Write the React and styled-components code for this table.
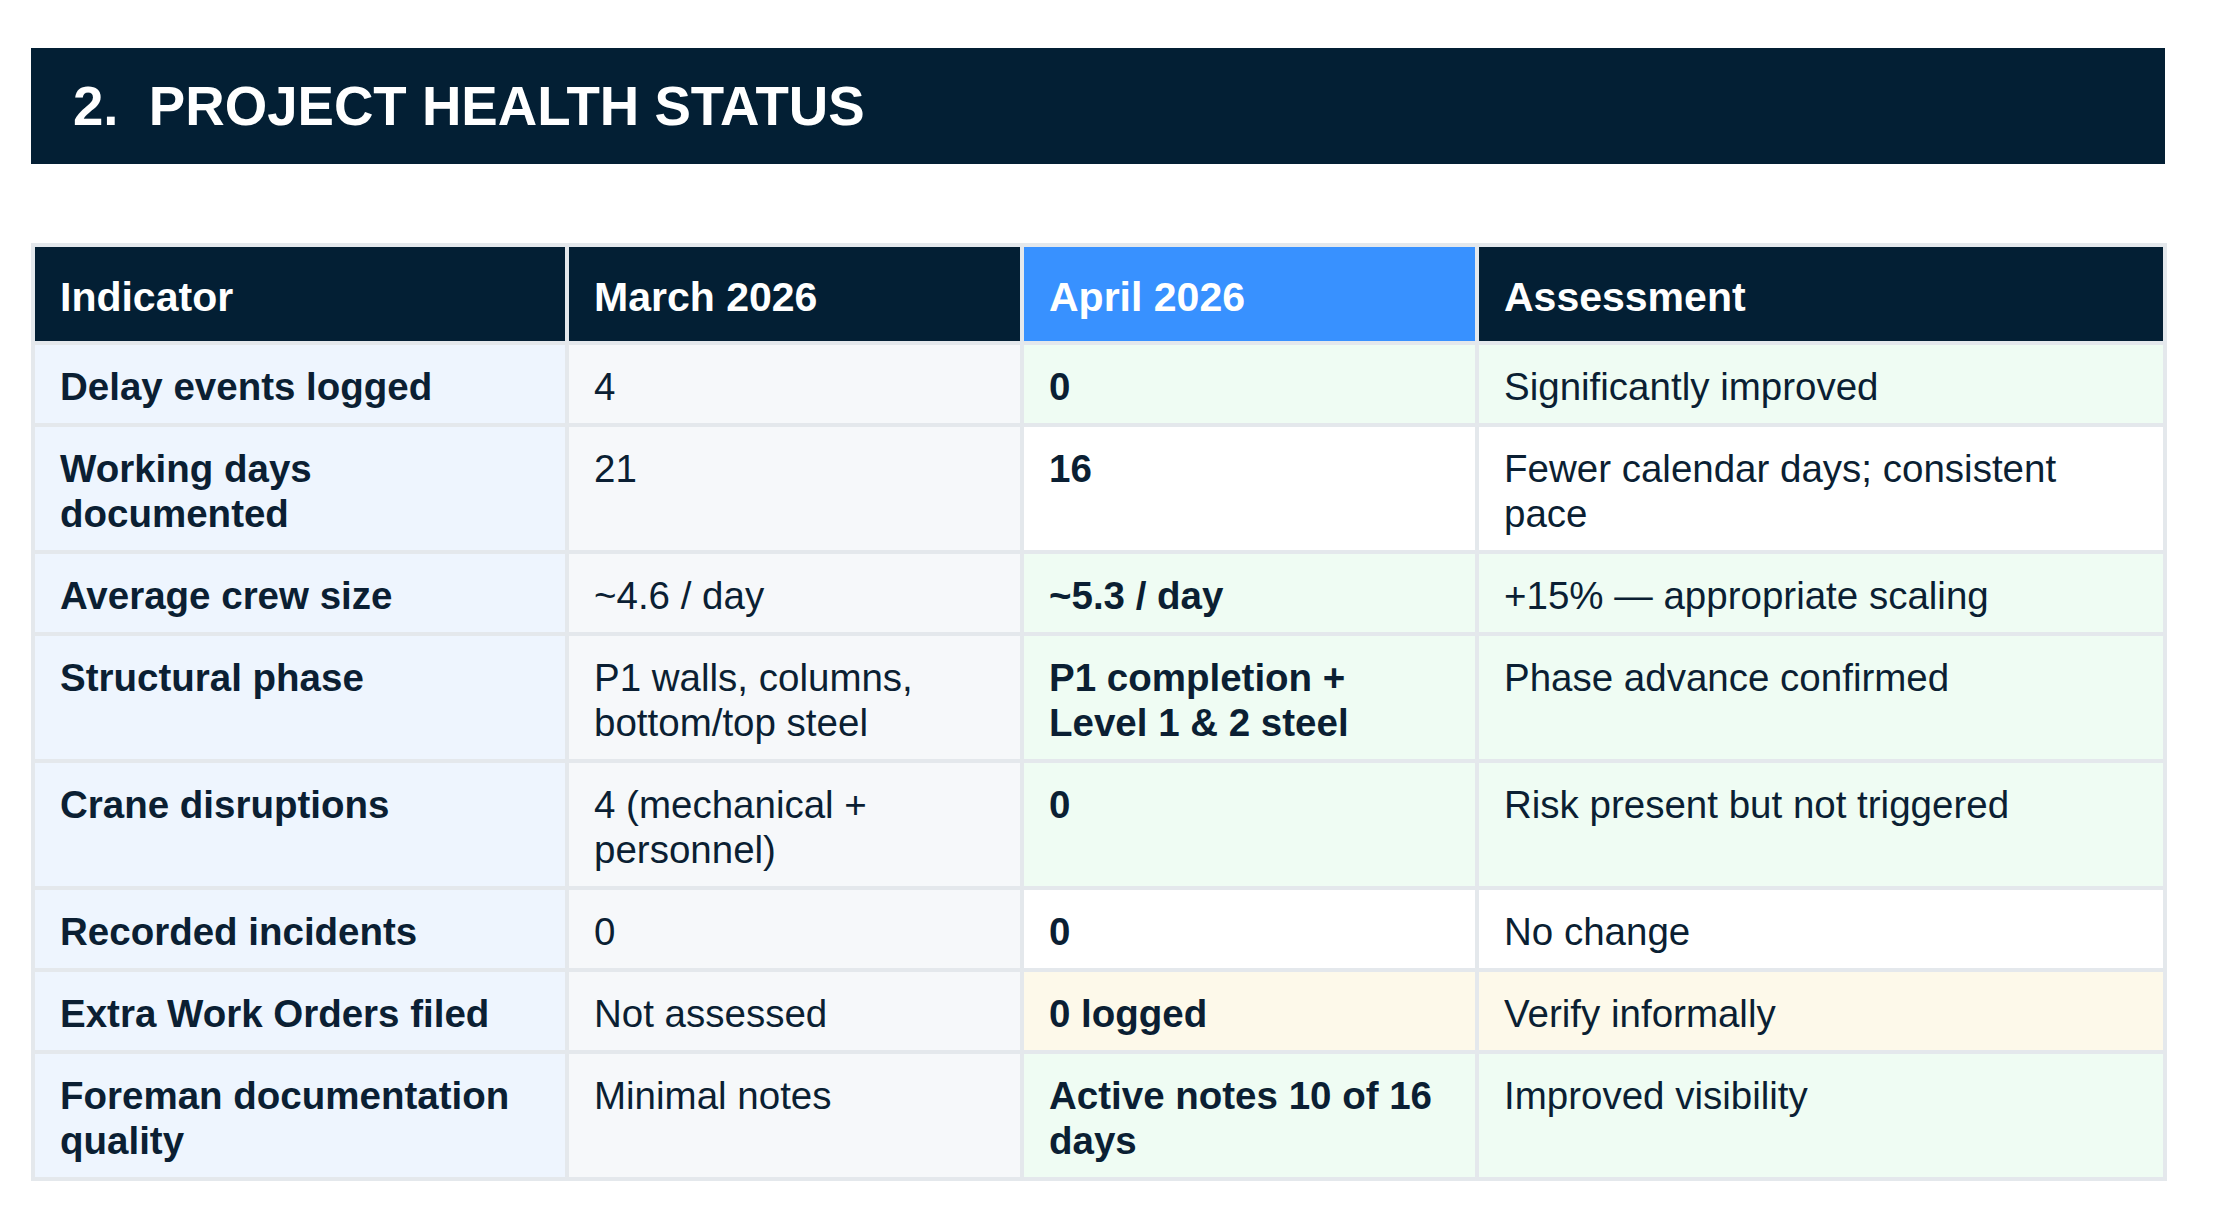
import React from "react";
import styled, { createGlobalStyle } from "styled-components";

const Global = createGlobalStyle`
  html, body { margin: 0; padding: 0; background: #ffffff; }
  body { font-family: "Liberation Sans", Arial, Helvetica, sans-serif; color: #0b1f33; }
`;

const Page = styled.div`
  padding: 48px 55px 30px 31px;
  width: 2134px;
`;

const SectionBar = styled.div`
  height: 116px;
  background: #031f34;
  display: flex;
  align-items: center;
  padding-left: 42px;
  box-sizing: border-box;
`;

const SectionTitle = styled.h2`
  margin: 0;
  font-size: 54.6px;
  font-weight: 700;
  color: #ffffff;
  white-space: pre;
  letter-spacing: 0;
`;

const Table = styled.table`
  margin-top: 79px;
  width: 2132px;
  table-layout: fixed;
  border-collapse: collapse;
  border: 4px solid #e4e8ec;
`;

const HeadCell = styled.th`
  text-align: left;
  vertical-align: top;
  font-size: 41px;
  line-height: 48px;
  font-weight: 700;
  color: #ffffff;
  background: ${(p) => (p.$accent ? "#3891ff" : "#031f34")};
  padding: 26px 25px 20px 25px;
  border: 4px solid #e4e8ec;
`;

const tones = {
  label: "#eef5fe",
  prev: "#f6f8fa",
  green: "#effcf3",
  white: "#ffffff",
  yellow: "#fdf9ea",
};

const Cell = styled.td`
  text-align: left;
  vertical-align: top;
  font-size: 38.5px;
  line-height: 45px;
  font-weight: ${(p) => (p.$bold ? 700 : 400)};
  color: #0b1f33;
  background: ${(p) => tones[p.$tone]};
  padding: 19px 30px 14px 25px;
  border: 4px solid #e4e8ec;
`;

const rows = [
  ["Delay events logged", "4", "0", "Significantly improved", "green"],
  ["Working days documented", "21", "16", "Fewer calendar days; consistent pace", "white"],
  ["Average crew size", "~4.6 / day", "~5.3 / day", "+15% \u2014 appropriate scaling", "green"],
  ["Structural phase", "P1 walls, columns, bottom/top steel", "P1 completion + Level 1 & 2 steel", "Phase advance confirmed", "green"],
  ["Crane disruptions", "4 (mechanical + personnel)", "0", "Risk present but not triggered", "green"],
  ["Recorded incidents", "0", "0", "No change", "white"],
  ["Extra Work Orders filed", "Not assessed", "0 logged", "Verify informally", "yellow"],
  ["Foreman documentation quality", "Minimal notes", "Active notes 10 of 16 days", "Improved visibility", "green"],
];

export default function App() {
  return (
    <Page>
      <Global />
      <SectionBar>
        <SectionTitle>{"2.  PROJECT HEALTH STATUS"}</SectionTitle>
      </SectionBar>
      <Table>
        <colgroup>
          <col style={{ width: 534 }} />
          <col style={{ width: 455 }} />
          <col style={{ width: 455 }} />
          <col style={{ width: 688 }} />
        </colgroup>
        <thead>
          <tr>
            <HeadCell>Indicator</HeadCell>
            <HeadCell>March 2026</HeadCell>
            <HeadCell $accent>April 2026</HeadCell>
            <HeadCell>Assessment</HeadCell>
          </tr>
        </thead>
        <tbody>
          {rows.map(([label, prev, cur, note, tone]) => (
            <tr key={label}>
              <Cell $tone="label" $bold>{label}</Cell>
              <Cell $tone="prev">{prev}</Cell>
              <Cell $tone={tone} $bold>{cur}</Cell>
              <Cell $tone={tone}>{note}</Cell>
            </tr>
          ))}
        </tbody>
      </Table>
    </Page>
  );
}
